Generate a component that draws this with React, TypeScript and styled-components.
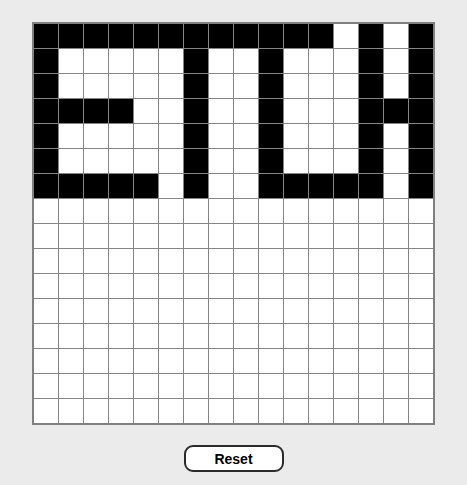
import React, { ReactElement, useCallback, useState } from 'react'
import styled, { createGlobalStyle } from 'styled-components'

const SIZE = 16
const CELL = 24

// initial drawing, one string per row, '#' is a filled cell
const PATTERN = [
  '############.#.#',
  '#.....#..#...#.#',
  '#.....#..#...#.#',
  '####..#..#...###',
  '#.....#..#...#.#',
  '#.....#..#...#.#',
  '#####.#..#####.#',
]

const buildGrid = (): boolean[] =>
  Array.from({ length: SIZE * SIZE }, (_, i) => {
    const row = PATTERN[Math.floor(i / SIZE)]
    return row ? row[i % SIZE] === '#' : false
  })

export default function App(): ReactElement {
  const [cells, setCells] = useState<boolean[]>(buildGrid)

  const onCellClick = useCallback((index: number) => {
    setCells((prev) => prev.map((on, i) => (i === index ? !on : on)))
  }, [])

  const onReset = useCallback(() => {
    setCells(Array(SIZE * SIZE).fill(false))
  }, [])

  return (
    <>
      <GlobalStyle />
      <Page>
        <Board>
          {cells.map((on, i) => (
            <Cell key={i} $on={on} onClick={() => onCellClick(i)} />
          ))}
        </Board>
        <ResetButton onClick={onReset}>Reset</ResetButton>
      </Page>
    </>
  )
}

const GlobalStyle = createGlobalStyle`
  html, body {
    margin: 0;
    padding: 0;
    background: #ecebeb;
  }
  body {
    font-family: "Liberation Sans", Arial, sans-serif;
  }
`

const Page = styled.div`
  display: flex;
  flex-direction: column;
  align-items: center;
  padding-top: 22px;
  gap: 20px;
`

const Board = styled.div`
  display: grid;
  grid-template-columns: repeat(${SIZE}, ${CELL}px);
  grid-auto-rows: ${CELL}px;
  gap: 1px;
  background: #858585;
  border: 2px solid #808080;
`

const Cell = styled.div<{ $on: boolean }>`
  background: ${({ $on }) => ($on ? '#000000' : '#ffffff')};
  cursor: pointer;
`

const ResetButton = styled.button`
  width: 100px;
  height: 27px;
  padding: 0;
  background: #ffffff;
  border: 2px solid #2b2b2b;
  border-radius: 9px;
  font-family: "Liberation Sans", Arial, sans-serif;
  font-size: 14px;
  font-weight: bold;
  color: #000000;
  cursor: pointer;
`
